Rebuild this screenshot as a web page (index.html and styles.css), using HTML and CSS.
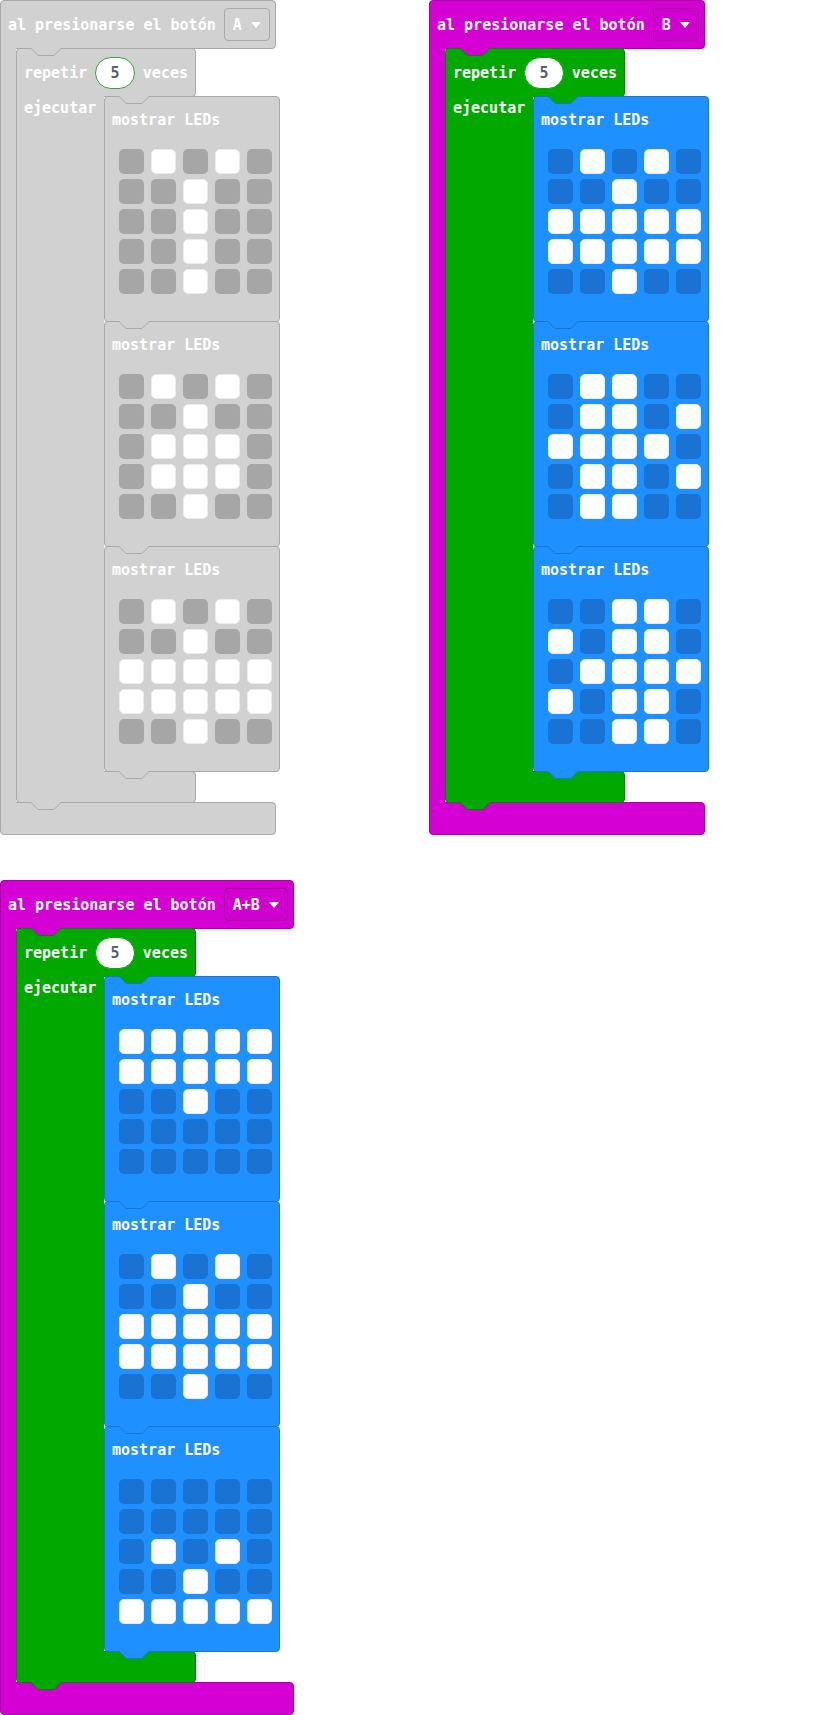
FILE: index.html
```
<!DOCTYPE html>
<html lang="es">
<head>
<meta charset="utf-8">
<title>Bloques</title>
<link rel="stylesheet" href="styles.css">
</head>
<body>
<div class="workspace">

  <!-- Block A (gray) -->
  <div class="hat gray">
    <div class="hat-head">
      <span class="txt">al presionarse el botón</span>
      <span class="dropdown">A<b class="caret"></b></span>
    </div>
    <div class="c-body">
      <div class="stem"></div>
      <div class="stmts">
        <div class="repeat gray">
          <svg class="notch" viewBox="0 0 30 8" width="30" height="8"><path class="nf" d="M0 0L7 7H23L30 0Z"/><path class="ns" d="M0 .5L7 7.5H23L30 .5"/></svg>
          <div class="rep-head"><span class="txt">repetir</span><span class="num">5</span><span class="txt">veces</span></div>
          <div class="c-body">
            <div class="stem"><span class="label">ejecutar</span></div>
            <div class="stmts">
              <div class="led gray">
                <svg class="notch" viewBox="0 0 30 8" width="30" height="8"><path class="nf" d="M0 0L7 7H23L30 0Z"/><path class="ns" d="M0 .5L7 7.5H23L30 .5"/></svg>
                <div class="led-title">mostrar LEDs</div>
                <div class="matrix">
                  <i></i><i class="on"></i><i></i><i class="on"></i><i></i>
                  <i></i><i></i><i class="on"></i><i></i><i></i>
                  <i></i><i></i><i class="on"></i><i></i><i></i>
                  <i></i><i></i><i class="on"></i><i></i><i></i>
                  <i></i><i></i><i class="on"></i><i></i><i></i>
                </div>
                <svg class="tab" viewBox="0 0 30 8" width="30" height="8"><path class="nf" d="M0 0L7 7H23L30 0Z"/><path class="ns" d="M0 .5L7 7.5H23L30 .5"/></svg>
              </div>
              <div class="led gray">
                <svg class="notch" viewBox="0 0 30 8" width="30" height="8"><path class="nf" d="M0 0L7 7H23L30 0Z"/><path class="ns" d="M0 .5L7 7.5H23L30 .5"/></svg>
                <div class="led-title">mostrar LEDs</div>
                <div class="matrix">
                  <i></i><i class="on"></i><i></i><i class="on"></i><i></i>
                  <i></i><i></i><i class="on"></i><i></i><i></i>
                  <i></i><i class="on"></i><i class="on"></i><i class="on"></i><i></i>
                  <i></i><i class="on"></i><i class="on"></i><i class="on"></i><i></i>
                  <i></i><i></i><i class="on"></i><i></i><i></i>
                </div>
                <svg class="tab" viewBox="0 0 30 8" width="30" height="8"><path class="nf" d="M0 0L7 7H23L30 0Z"/><path class="ns" d="M0 .5L7 7.5H23L30 .5"/></svg>
              </div>
              <div class="led gray">
                <svg class="notch" viewBox="0 0 30 8" width="30" height="8"><path class="nf" d="M0 0L7 7H23L30 0Z"/><path class="ns" d="M0 .5L7 7.5H23L30 .5"/></svg>
                <div class="led-title">mostrar LEDs</div>
                <div class="matrix">
                  <i></i><i class="on"></i><i></i><i class="on"></i><i></i>
                  <i></i><i></i><i class="on"></i><i></i><i></i>
                  <i class="on"></i><i class="on"></i><i class="on"></i><i class="on"></i><i class="on"></i>
                  <i class="on"></i><i class="on"></i><i class="on"></i><i class="on"></i><i class="on"></i>
                  <i></i><i></i><i class="on"></i><i></i><i></i>
                </div>
                <svg class="tab" viewBox="0 0 30 8" width="30" height="8"><path class="nf" d="M0 0L7 7H23L30 0Z"/><path class="ns" d="M0 .5L7 7.5H23L30 .5"/></svg>
              </div>
            </div>
          </div>
          <div class="c-foot"></div>
          <svg class="tab" viewBox="0 0 30 8" width="30" height="8"><path class="nf" d="M0 0L7 7H23L30 0Z"/><path class="ns" d="M0 .5L7 7.5H23L30 .5"/></svg>
        </div>
      </div>
    </div>
    <div class="c-foot"></div>
  </div>

  <!-- Block B (colour) -->
  <div class="hat pink">
    <div class="hat-head">
      <span class="txt">al presionarse el botón</span>
      <span class="dropdown">B<b class="caret"></b></span>
    </div>
    <div class="c-body">
      <div class="stem"></div>
      <div class="stmts">
        <div class="repeat green">
          <svg class="notch" viewBox="0 0 30 8" width="30" height="8"><path class="nf" d="M0 0L7 7H23L30 0Z"/><path class="ns" d="M0 .5L7 7.5H23L30 .5"/></svg>
          <div class="rep-head"><span class="txt">repetir</span><span class="num">5</span><span class="txt">veces</span></div>
          <div class="c-body">
            <div class="stem"><span class="label">ejecutar</span></div>
            <div class="stmts">
              <div class="led blue">
                <svg class="notch" viewBox="0 0 30 8" width="30" height="8"><path class="nf" d="M0 0L7 7H23L30 0Z"/><path class="ns" d="M0 .5L7 7.5H23L30 .5"/></svg>
                <div class="led-title">mostrar LEDs</div>
                <div class="matrix">
                  <i></i><i class="on"></i><i></i><i class="on"></i><i></i>
                  <i></i><i></i><i class="on"></i><i></i><i></i>
                  <i class="on"></i><i class="on"></i><i class="on"></i><i class="on"></i><i class="on"></i>
                  <i class="on"></i><i class="on"></i><i class="on"></i><i class="on"></i><i class="on"></i>
                  <i></i><i></i><i class="on"></i><i></i><i></i>
                </div>
                <svg class="tab" viewBox="0 0 30 8" width="30" height="8"><path class="nf" d="M0 0L7 7H23L30 0Z"/><path class="ns" d="M0 .5L7 7.5H23L30 .5"/></svg>
              </div>
              <div class="led blue">
                <svg class="notch" viewBox="0 0 30 8" width="30" height="8"><path class="nf" d="M0 0L7 7H23L30 0Z"/><path class="ns" d="M0 .5L7 7.5H23L30 .5"/></svg>
                <div class="led-title">mostrar LEDs</div>
                <div class="matrix">
                  <i></i><i class="on"></i><i class="on"></i><i></i><i></i>
                  <i></i><i class="on"></i><i class="on"></i><i></i><i class="on"></i>
                  <i class="on"></i><i class="on"></i><i class="on"></i><i class="on"></i><i></i>
                  <i></i><i class="on"></i><i class="on"></i><i></i><i class="on"></i>
                  <i></i><i class="on"></i><i class="on"></i><i></i><i></i>
                </div>
                <svg class="tab" viewBox="0 0 30 8" width="30" height="8"><path class="nf" d="M0 0L7 7H23L30 0Z"/><path class="ns" d="M0 .5L7 7.5H23L30 .5"/></svg>
              </div>
              <div class="led blue">
                <svg class="notch" viewBox="0 0 30 8" width="30" height="8"><path class="nf" d="M0 0L7 7H23L30 0Z"/><path class="ns" d="M0 .5L7 7.5H23L30 .5"/></svg>
                <div class="led-title">mostrar LEDs</div>
                <div class="matrix">
                  <i></i><i></i><i class="on"></i><i class="on"></i><i></i>
                  <i class="on"></i><i></i><i class="on"></i><i class="on"></i><i></i>
                  <i></i><i class="on"></i><i class="on"></i><i class="on"></i><i class="on"></i>
                  <i class="on"></i><i></i><i class="on"></i><i class="on"></i><i></i>
                  <i></i><i></i><i class="on"></i><i class="on"></i><i></i>
                </div>
                <svg class="tab" viewBox="0 0 30 8" width="30" height="8"><path class="nf" d="M0 0L7 7H23L30 0Z"/><path class="ns" d="M0 .5L7 7.5H23L30 .5"/></svg>
              </div>
            </div>
          </div>
          <div class="c-foot"></div>
          <svg class="tab" viewBox="0 0 30 8" width="30" height="8"><path class="nf" d="M0 0L7 7H23L30 0Z"/><path class="ns" d="M0 .5L7 7.5H23L30 .5"/></svg>
        </div>
      </div>
    </div>
    <div class="c-foot"></div>
  </div>

  <!-- Block A+B (colour) -->
  <div class="hat pink wide">
    <div class="hat-head">
      <span class="txt">al presionarse el botón</span>
      <span class="dropdown">A+B<b class="caret"></b></span>
    </div>
    <div class="c-body">
      <div class="stem"></div>
      <div class="stmts">
        <div class="repeat green">
          <svg class="notch" viewBox="0 0 30 8" width="30" height="8"><path class="nf" d="M0 0L7 7H23L30 0Z"/><path class="ns" d="M0 .5L7 7.5H23L30 .5"/></svg>
          <div class="rep-head"><span class="txt">repetir</span><span class="num">5</span><span class="txt">veces</span></div>
          <div class="c-body">
            <div class="stem"><span class="label">ejecutar</span></div>
            <div class="stmts">
              <div class="led blue">
                <svg class="notch" viewBox="0 0 30 8" width="30" height="8"><path class="nf" d="M0 0L7 7H23L30 0Z"/><path class="ns" d="M0 .5L7 7.5H23L30 .5"/></svg>
                <div class="led-title">mostrar LEDs</div>
                <div class="matrix">
                  <i class="on"></i><i class="on"></i><i class="on"></i><i class="on"></i><i class="on"></i>
                  <i class="on"></i><i class="on"></i><i class="on"></i><i class="on"></i><i class="on"></i>
                  <i></i><i></i><i class="on"></i><i></i><i></i>
                  <i></i><i></i><i></i><i></i><i></i>
                  <i></i><i></i><i></i><i></i><i></i>
                </div>
                <svg class="tab" viewBox="0 0 30 8" width="30" height="8"><path class="nf" d="M0 0L7 7H23L30 0Z"/><path class="ns" d="M0 .5L7 7.5H23L30 .5"/></svg>
              </div>
              <div class="led blue">
                <svg class="notch" viewBox="0 0 30 8" width="30" height="8"><path class="nf" d="M0 0L7 7H23L30 0Z"/><path class="ns" d="M0 .5L7 7.5H23L30 .5"/></svg>
                <div class="led-title">mostrar LEDs</div>
                <div class="matrix">
                  <i></i><i class="on"></i><i></i><i class="on"></i><i></i>
                  <i></i><i></i><i class="on"></i><i></i><i></i>
                  <i class="on"></i><i class="on"></i><i class="on"></i><i class="on"></i><i class="on"></i>
                  <i class="on"></i><i class="on"></i><i class="on"></i><i class="on"></i><i class="on"></i>
                  <i></i><i></i><i class="on"></i><i></i><i></i>
                </div>
                <svg class="tab" viewBox="0 0 30 8" width="30" height="8"><path class="nf" d="M0 0L7 7H23L30 0Z"/><path class="ns" d="M0 .5L7 7.5H23L30 .5"/></svg>
              </div>
              <div class="led blue">
                <svg class="notch" viewBox="0 0 30 8" width="30" height="8"><path class="nf" d="M0 0L7 7H23L30 0Z"/><path class="ns" d="M0 .5L7 7.5H23L30 .5"/></svg>
                <div class="led-title">mostrar LEDs</div>
                <div class="matrix">
                  <i></i><i></i><i></i><i></i><i></i>
                  <i></i><i></i><i></i><i></i><i></i>
                  <i></i><i class="on"></i><i></i><i class="on"></i><i></i>
                  <i></i><i></i><i class="on"></i><i></i><i></i>
                  <i class="on"></i><i class="on"></i><i class="on"></i><i class="on"></i><i class="on"></i>
                </div>
                <svg class="tab" viewBox="0 0 30 8" width="30" height="8"><path class="nf" d="M0 0L7 7H23L30 0Z"/><path class="ns" d="M0 .5L7 7.5H23L30 .5"/></svg>
              </div>
            </div>
          </div>
          <div class="c-foot"></div>
          <svg class="tab" viewBox="0 0 30 8" width="30" height="8"><path class="nf" d="M0 0L7 7H23L30 0Z"/><path class="ns" d="M0 .5L7 7.5H23L30 .5"/></svg>
        </div>
      </div>
    </div>
    <div class="c-foot"></div>
  </div>

</div>
</body>
</html>
```

FILE: styles.css
```
* { box-sizing: border-box; }

html, body {
  margin: 0;
  background: #ffffff;
}

body {
  font-family: "DejaVu Sans Mono", "Liberation Mono", monospace;
  font-weight: bold;
  font-size: 15px;
  color: #ffffff;
}

.workspace {
  display: grid;
  grid-template-columns: 429px auto;
  row-gap: 45px;
  align-items: start;
}

/* colour themes */
.gray  { --fill: #d1d1d1; --edge: #a9a9a9; --off: #a6a6a6; --dd: #d1d1d1; --num-edge: #3f9d3f; }
.pink  { --fill: #d400d4; --edge: #a600a6; --dd: #d000d0; }
.green { --fill: #00a800; --edge: #008700; --num-edge: #00a800; }
.blue  { --fill: #1e90ff; --edge: #1a75d2; --off: #1a73d2; }

/* generic C-shaped blocks */
.hat, .repeat {
  display: flex;
  flex-direction: column;
  align-items: flex-start;
}

.repeat { position: relative; }

.c-body {
  display: flex;
  margin-top: -1px;
}

.stmts {
  display: flex;
  flex-direction: column;
  --above: var(--fill);
}

.stem {
  position: relative;
  background: var(--fill);
  border-left: 1px solid var(--edge);
}

.c-foot {
  margin-top: -1px;
  background: var(--fill);
  border: 1px solid var(--edge);
  border-radius: 0 4px 4px 4px;
}

/* hat block */
.hat-head {
  width: 276px;
  height: 49px;
  display: flex;
  align-items: center;
  gap: 8px;
  padding: 0 7px;
  background: var(--fill);
  border: 1px solid var(--edge);
  border-radius: 4px 4px 4px 0;
  white-space: nowrap;
}

.hat > .c-body > .stem { width: 16px; }
.hat > .c-foot { width: 276px; height: 33px; }

.wide > .hat-head,
.wide > .c-foot { width: 294px; }

.dropdown {
  display: flex;
  align-items: center;
  gap: 9px;
  height: 33px;
  padding: 0 8px 0 8px;
  background: var(--dd);
  border: 1px solid var(--edge);
  border-radius: 4px;
}

.caret {
  width: 0;
  height: 0;
  border-left: 5px solid transparent;
  border-right: 5px solid transparent;
  border-top: 6px solid #ffffff;
}

/* repeat block */
.rep-head {
  width: 180px;
  height: 49px;
  display: flex;
  align-items: center;
  gap: 8px;
  padding: 0 7px;
  background: var(--fill);
  border: 1px solid var(--edge);
  border-radius: 4px 4px 4px 0;
}

.num {
  width: 40px;
  height: 32px;
  display: flex;
  align-items: center;
  justify-content: center;
  background: #ffffff;
  border: 1px solid var(--num-edge);
  border-radius: 16px;
  color: #575e75;
}

.repeat > .c-body > .stem {
  width: 88px;
  padding: 3px 0 0 7px;
  line-height: 18px;
}

.repeat > .c-foot { width: 180px; height: 32px; }

/* show LEDs block */
.led {
  position: relative;
  width: 176px;
  height: 226px;
  background: var(--fill);
  border: 1px solid var(--edge);
  border-radius: 4px;
}

.led + .led {
  margin-top: -1px;
  --above: var(--fill);
}

.led-title {
  height: 46px;
  display: flex;
  align-items: center;
  padding-left: 7px;
}

.matrix {
  margin: 6px 0 0 14px;
  display: grid;
  grid-template-columns: repeat(5, 25px);
  grid-auto-rows: 25px;
  column-gap: 7px;
  row-gap: 5px;
}

.matrix i {
  display: block;
  background: var(--off);
  border-radius: 5px;
}

.matrix i.on {
  background: #ffffff;
  border: 1px solid #ececec;
}

/* notches and tabs */
.notch, .tab {
  position: absolute;
  display: block;
  overflow: visible;
}

.notch .nf { fill: var(--above); }
.tab .nf { fill: var(--fill); }
.ns { fill: none; stroke: var(--edge); stroke-width: 1; }

.led > .notch { top: -1px; left: 14px; }
.led > .tab { top: 100%; left: 14px; }

.repeat > .notch { top: 0; left: 15px; }
.repeat > .tab { top: calc(100% - 1px); left: 15px; }
```
